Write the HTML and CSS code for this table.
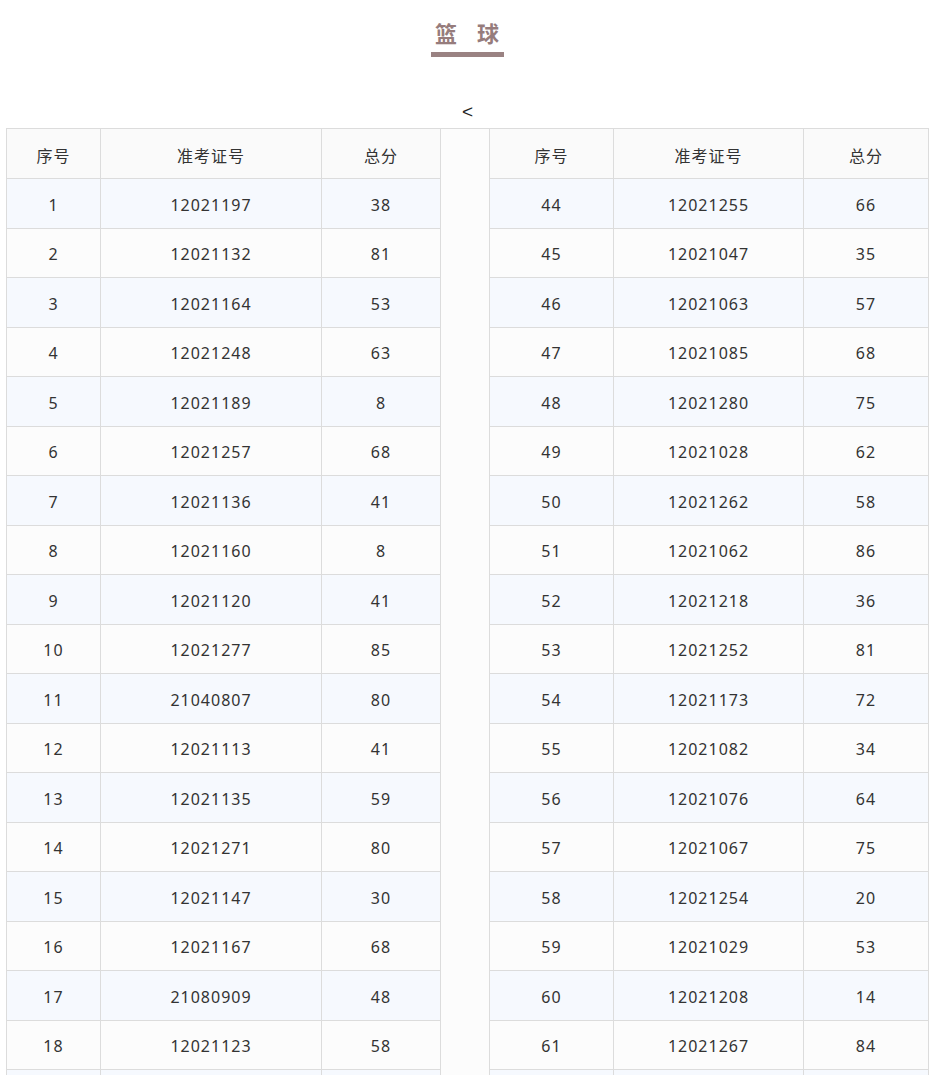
FILE: index.html
```html
<!DOCTYPE html>
<html lang="zh-CN">
<head>
<meta charset="utf-8">
<title>篮球</title>
<link rel="stylesheet" href="styles.css">
</head>
<body>
<div class="page">
  <header class="title-wrap">
    <h1 class="title">篮<span class="sp"></span>球</h1>
  </header>
  <div class="nav">&lt;</div>
  <table class="scores">
    <colgroup>
      <col class="c1"><col class="c2"><col class="c3"><col class="cg"><col class="c4"><col class="c5"><col class="c6">
    </colgroup>
    <tbody>
      <tr class="head">
        <th>序号</th><th>准考证号</th><th>总分</th>
        <td class="gap" rowspan="20"></td>
        <th>序号</th><th>准考证号</th><th>总分</th>
      </tr>
      <tr class="odd"><td>1</td><td>12021197</td><td>38</td><td>44</td><td>12021255</td><td>66</td></tr>
      <tr class="even"><td>2</td><td>12021132</td><td>81</td><td>45</td><td>12021047</td><td>35</td></tr>
      <tr class="odd"><td>3</td><td>12021164</td><td>53</td><td>46</td><td>12021063</td><td>57</td></tr>
      <tr class="even"><td>4</td><td>12021248</td><td>63</td><td>47</td><td>12021085</td><td>68</td></tr>
      <tr class="odd"><td>5</td><td>12021189</td><td>8</td><td>48</td><td>12021280</td><td>75</td></tr>
      <tr class="even"><td>6</td><td>12021257</td><td>68</td><td>49</td><td>12021028</td><td>62</td></tr>
      <tr class="odd"><td>7</td><td>12021136</td><td>41</td><td>50</td><td>12021262</td><td>58</td></tr>
      <tr class="even"><td>8</td><td>12021160</td><td>8</td><td>51</td><td>12021062</td><td>86</td></tr>
      <tr class="odd"><td>9</td><td>12021120</td><td>41</td><td>52</td><td>12021218</td><td>36</td></tr>
      <tr class="even"><td>10</td><td>12021277</td><td>85</td><td>53</td><td>12021252</td><td>81</td></tr>
      <tr class="odd"><td>11</td><td>21040807</td><td>80</td><td>54</td><td>12021173</td><td>72</td></tr>
      <tr class="even"><td>12</td><td>12021113</td><td>41</td><td>55</td><td>12021082</td><td>34</td></tr>
      <tr class="odd"><td>13</td><td>12021135</td><td>59</td><td>56</td><td>12021076</td><td>64</td></tr>
      <tr class="even"><td>14</td><td>12021271</td><td>80</td><td>57</td><td>12021067</td><td>75</td></tr>
      <tr class="odd"><td>15</td><td>12021147</td><td>30</td><td>58</td><td>12021254</td><td>20</td></tr>
      <tr class="even"><td>16</td><td>12021167</td><td>68</td><td>59</td><td>12021029</td><td>53</td></tr>
      <tr class="odd"><td>17</td><td>21080909</td><td>48</td><td>60</td><td>12021208</td><td>14</td></tr>
      <tr class="even"><td>18</td><td>12021123</td><td>58</td><td>61</td><td>12021267</td><td>84</td></tr>
      <tr class="odd"><td>19</td><td>12021151</td><td>62</td><td>62</td><td>12021236</td><td>70</td></tr>
    </tbody>
  </table>
</div>
</body>
</html>
```

FILE: styles.css
```css
html, body {
  margin: 0;
  padding: 0;
  background: #ffffff;
}

body {
  font-family: "Noto Sans", "Noto Sans CJK SC", sans-serif;
  color: #333333;
}

.page {
  padding: 0 6px;
}

.title-wrap {
  display: flex;
  justify-content: center;
  padding-top: 17px;
}

.title {
  margin: 0;
  font-family: "Noto Sans CJK SC", sans-serif;
  font-size: 22px;
  font-weight: 700;
  line-height: 30px;
  color: #967c7c;
  border-bottom: 5px solid #9a8282;
  padding: 0 5px 5px 4px;
  display: flex;
  align-items: center;
}

.sp {
  display: inline-block;
  width: 20px;
}

.nav {
  text-align: center;
  font-family: "Liberation Sans", sans-serif;
  font-size: 19px;
  line-height: 20px;
  margin-top: 45px;
  padding-left: 0;
  color: #222222;
}

.scores {
  margin-top: 6px;
  width: 922px;
  border-collapse: collapse;
  table-layout: fixed;
  font-size: 16px;
  letter-spacing: 1px;
}

.c1 { width: 94px; }
.c2 { width: 221px; }
.c3 { width: 119px; }
.cg { width: 49px; }
.c4 { width: 124px; }
.c5 { width: 190px; }
.c6 { width: 125px; }

.scores th,
.scores td {
  border: 1px solid #dcdcdc;
  text-align: center;
  vertical-align: middle;
  padding: 3px 0 0;
  height: 45.5px;
  font-weight: 400;
}

.head th {
  height: 46px;
  background: #fafafa;
}

.scores .gap {
  background: #fcfcfc;
}

.odd td {
  background: #f6f9fe;
}

.even td {
  background: #fcfcfc;
}
```
